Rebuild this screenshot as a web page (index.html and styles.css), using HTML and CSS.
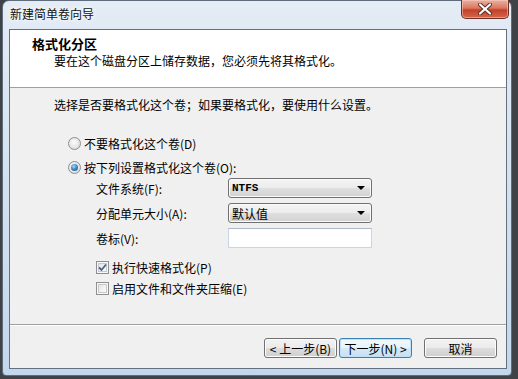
FILE: index.html
```html
<!DOCTYPE html>
<html lang="zh-CN">
<head>
<meta charset="UTF-8">
<title>新建简单卷向导</title>
<link rel="stylesheet" href="styles.css">
</head>
<body>
<div class="window">
  <div class="titlebar">
    <span class="title">新建简单卷向导</span>
    <button class="close" title="关闭">
      <svg width="14" height="12" viewBox="0 0 14 12">
        <path d="M2 1.5 L12 10.5 M12 1.5 L2 10.5" stroke="#5a2a20" stroke-width="4" stroke-linecap="round"/>
        <path d="M2 1.5 L12 10.5 M12 1.5 L2 10.5" stroke="#fff" stroke-width="2.2" stroke-linecap="round"/>
      </svg>
    </button>
  </div>
  <div class="client">
    <div class="header">
      <div class="heading">格式化分区</div>
      <div class="subheading">要在这个磁盘分区上储存数据，您必须先将其格式化。</div>
    </div>
    <div class="content">
      <p class="intro">选择是否要格式化这个卷；如果要格式化，要使用什么设置。</p>
      <div class="options">
        <div class="radio-row"><span class="radio"></span>不要格式化这个卷(D)</div>
        <div class="radio-row"><span class="radio checked"></span>按下列设置格式化这个卷(O):</div>
      </div>
      <div class="fields">
        <label>文件系统(F):</label>
        <div class="combo"><span class="mono">NTFS</span><span class="arrow"></span></div>
        <label>分配单元大小(A):</label>
        <div class="combo"><span>默认值</span><span class="arrow"></span></div>
        <label>卷标(V):</label>
        <div class="textbox"></div>
      </div>
      <div class="checks">
        <div class="check-row">
          <span class="check">
            <svg width="9" height="9" viewBox="0 0 9 9"><path d="M1 4.5 L3.5 7 L8 1.5" fill="none" stroke="#4a5f8f" stroke-width="1.8"/></svg>
          </span>执行快速格式化(P)
        </div>
        <div class="check-row"><span class="check"></span>启用文件和文件夹压缩(E)</div>
      </div>
    </div>
    <div class="footer">
      <button class="btn">&lt; 上一步(B)</button>
      <button class="btn default">下一步(N) &gt;</button>
      <button class="btn cancel">取消</button>
    </div>
  </div>
</div>
</body>
</html>
```

FILE: styles.css
```css
* {
  box-sizing: border-box;
}
body {
  margin: 0;
  background: #3f4348;
  font-family: "Noto Sans CJK SC", "Liberation Sans", sans-serif;
  font-size: 12px;
  color: #000;
}
.window {
  width: 510px;
  height: 376px;
  margin-left: 2px;
  border: 1px solid #5d6b7a;
  border-radius: 7px 7px 4px 4px;
  background: linear-gradient(to bottom, #e4ecf5 0%, #d6e3f0 40%, #c3d7ec 100%);
  display: flex;
  flex-direction: column;
}
.titlebar {
  height: 28px;
  display: flex;
  align-items: flex-start;
  padding-left: 7px;
}
.title {
  line-height: 26px;
  text-shadow: 0 0 6px #fff, 0 0 3px #fff;
  color: #111;
}
.close {
  margin: -1px 2px 0 auto;
  width: 48px;
  height: 19px;
  border: 1px solid #6e2f24;
  border-top: none;
  border-radius: 0 0 5px 5px;
  background: linear-gradient(to bottom, #eab0a4 0%, #d9785f 45%, #c3402a 55%, #d5664a 100%);
  box-shadow: inset 0 0 0 1px rgba(255, 210, 200, 0.5);
  display: flex;
  align-items: center;
  justify-content: center;
  padding: 0;
}
.client {
  margin: 0 4px 0 6px;
  width: 498px;
  height: 340px;
  border: 1px solid #62707f;
  background: #f0f0f0;
  display: flex;
  flex-direction: column;
}
.header {
  height: 58px;
  background: #fff;
  border-bottom: 1px solid #a0a0a0;
  padding: 5px 0 0 22px;
}
.heading {
  font-weight: bold;
  font-size: 13px;
  line-height: 18px;
}
.subheading {
  padding-left: 22px;
  line-height: 15px;
}
.content {
  height: 237px;
  border-bottom: 1px solid #a0a0a0;
  padding: 9px 0 0 44px;
}
.intro {
  margin: 0;
  line-height: 15px;
}
.options {
  margin: 21px 0 0 14px;
  display: flex;
  flex-direction: column;
  gap: 4px;
}
.radio-row {
  height: 20px;
  display: flex;
  align-items: center;
  gap: 3px;
}
.radio {
  width: 13px;
  height: 13px;
  border-radius: 50%;
  border: 1px solid #8c8e90;
  background: radial-gradient(circle at 45% 40%, #fcfcfc 0%, #e4e4e4 60%, #c9cacb 100%);
  display: flex;
  align-items: center;
  justify-content: center;
}
.radio.checked::after {
  content: "";
  width: 7px;
  height: 7px;
  border-radius: 50%;
  background: radial-gradient(circle at 40% 35%, #a6dcf8 0%, #3f8cc6 45%, #1b4f7d 100%);
}
.fields {
  margin: 1px 0 0 41px;
  display: grid;
  grid-template-columns: 133px 144px;
  grid-auto-rows: 20px;
  row-gap: 5px;
  align-items: center;
}
.fields label {
  padding-left: 1px;
}
.combo {
  height: 20px;
  border: 1px solid #707070;
  border-radius: 3px;
  background: linear-gradient(to bottom, #f4f4f4 0%, #ececec 50%, #dfdfdf 51%, #d2d2d2 100%);
  box-shadow: inset 0 0 0 1px #fafafa;
  display: flex;
  align-items: center;
  padding: 0 6px 0 3px;
}
.mono {
  font-family: "Liberation Mono", "Noto Sans CJK SC", monospace;
  font-weight: bold;
  font-size: 11px;
}
.arrow {
  margin-left: auto;
  width: 0;
  height: 0;
  border-left: 4px solid transparent;
  border-right: 4px solid transparent;
  border-top: 4px solid #000;
}
.textbox {
  height: 20px;
  background: #fff;
  border: 1px solid #c9d5e2;
  border-top-color: #abb9c9;
}
.checks {
  margin: 9px 0 0 42px;
  display: flex;
  flex-direction: column;
  gap: 1px;
}
.check-row {
  height: 20px;
  display: flex;
  align-items: center;
  gap: 3px;
}
.check {
  width: 13px;
  height: 13px;
  border: 1px solid #8e8f8f;
  background: linear-gradient(135deg, #dcdcdc 0%, #f4f4f4 60%, #fff 100%);
  box-shadow: inset 0 0 0 1px #f8f8f8, inset 0 0 0 2px #c8c9ca;
  display: flex;
  align-items: center;
  justify-content: center;
}
.footer {
  flex: 1;
  border-top: 1px solid #fff;
  padding: 12px 9px 0 0;
  display: flex;
  justify-content: flex-end;
  align-items: flex-start;
  gap: 2px;
}
.btn {
  width: 73px;
  height: 20px;
  padding: 0;
  font-family: inherit;
  font-size: 12px;
  color: #000;
  border: 1px solid #707070;
  border-radius: 3px;
  background: linear-gradient(to bottom, #f2f2f2 0%, #ebebeb 50%, #dddddd 51%, #cfcfcf 100%);
  box-shadow: inset 0 0 0 1px #fcfcfc;
}
.btn.default {
  border-color: #3c7fb1;
  background: linear-gradient(to bottom, #f3f9fd 0%, #e6f2fa 50%, #d6e9f6 51%, #c6e0f2 100%);
  box-shadow: inset 0 0 0 1px #bfe2f8;
}
.btn.cancel {
  margin-left: 10px;
}
```
